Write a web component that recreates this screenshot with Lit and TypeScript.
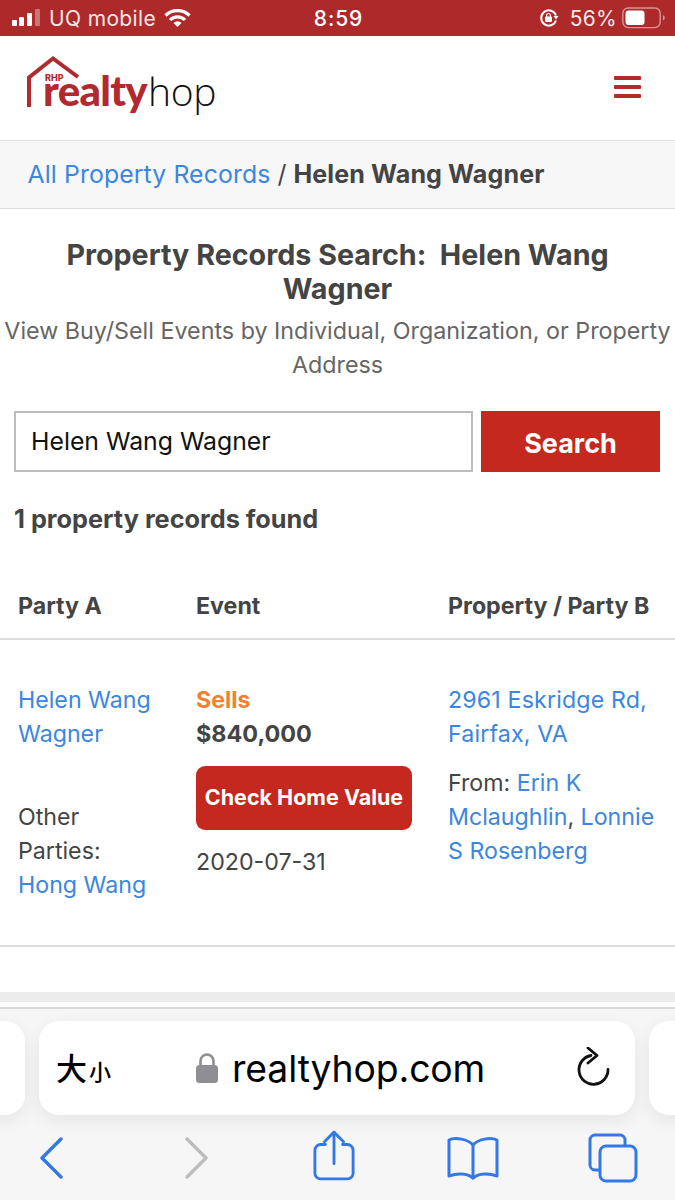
import { LitElement, html, css } from "lit";
import { customElement } from "lit/decorators.js";

@customElement("app-root")
export class AppRoot extends LitElement {
  static styles = css`
    :host { display: block; width: 675px; height: 1200px; overflow: hidden; background: #fff;
      font-family: Inter, "Liberation Sans", sans-serif; color: #444; font-size: 23px; }
    a { color: #3a86e0; text-decoration: none; }
    .status { height: 36px; background: #ae2a2a; color: #fff; display: grid; grid-template-columns: 1fr auto 1fr; align-items: center; padding: 0 9px 0 12px; box-sizing: border-box; font-size: 21px; }
    .s-left { display: flex; align-items: center; gap: 8px; font-weight: 400; letter-spacing: .35px; color: #f5e6e6; }
    .s-right { display: flex; align-items: center; justify-content: flex-end; gap: 5px; color: #f5e6e6; }
    .s-right .pct { margin-left: 6px; letter-spacing: .3px; }
    .time { font-weight: 500; font-size: 21px; letter-spacing: .9px; margin-left: -1px; }
    .head { height: 104px; display: flex; align-items: center; justify-content: space-between; padding: 0 34px 0 26px; box-sizing: border-box; }
    .logo { position: relative; width: 200px; height: 84px; }
    .logo svg { position: absolute; left: 0; top: 0; }
    .logo-text { position: absolute; left: 17px; top: 35px; font-family: Lato, sans-serif; font-size: 42px; line-height: 18px; letter-spacing: -.7px; white-space: nowrap; }
    .logo-text b { color: #b12a2f; font-weight: 900; }
    .logo-text span { color: #111; font-weight: 300; font-family: "Open Sans", sans-serif; font-size: 39px; letter-spacing: -.3px; margin-left: 1px; }
    .rhp { position: absolute; left: 19px; top: 29px; font-size: 9px; line-height: 6px; font-weight: 800; color: #b12a2f; }
    .burger { width: 27px; display: flex; flex-direction: column; gap: 5px; margin-top: -2px; }
    .burger i { height: 4px; background: #b32a2a; border-radius: 1px; display: block; }
    .crumb { height: 69px; background: #f7f7f7; border-top: 1px solid #dcdcdc; border-bottom: 1px solid #dcdcdc; box-sizing: border-box; display: flex; align-items: center; padding: 0 28px 2px 27.500px; font-size: 24.8px; letter-spacing: .1px; }
    .crumb b { font-weight: 700; font-size: 25.1px; }
    .crumb em { font-style: normal; margin: 0 7px; }
    .intro { text-align: center; padding-top: 29px; }
    h1 { margin: 0 30px; font-size: 28.7px; line-height: 34px; font-weight: 700; white-space: pre-wrap; color: #444; }
    .sub { margin-top: 8px; font-size: 23.3px; line-height: 34px; color: #666; white-space: nowrap; }
    .search { display: flex; gap: 8px; margin: 29px 15px 0 14px; height: 61px; }
    .input { flex: 1; border: 2px solid #bdbdbd; box-sizing: border-box; display: flex; align-items: center; padding: 0 0 2px 15px; font-size: 24.8px; color: #111; }
    .btn { width: 179px; background: #c4281f; color: #fff; font-weight: 700; font-size: 27px; display: flex; align-items: center; justify-content: center; padding-top: 3px; box-sizing: border-box; }
    .found { margin: 30px 14px 0; font-size: 25.3px; line-height: 34px; font-weight: 700; }
    .row { display: grid; grid-template-columns: 178px 252px 1fr; padding-left: 18px; }
    .thead { margin-top: 53px; font-weight: 700; font-size: 23.2px; line-height: 34px; border-bottom: 2px solid #ddd; height: 33px; padding-bottom: 16px; }
    .tbody { padding-top: 43px; padding-bottom: 44px; border-bottom: 2px solid #ddd; line-height: 34px; font-size: 23.2px; height: 218px; }
    .addr { letter-spacing: .15px; }
    .others { margin-top: 49px; }
    .sells { color: #ef8233; font-weight: 700; font-size: 23.2px; }
    .price { font-weight: 700; font-size: 23.4px; }
    .cta { margin: 15px 0 15px; width: 216px; height: 64px; border-radius: 9px; background: #c4281f; color: #fff; font-weight: 700; font-size: 21.5px; display: flex; align-items: center; justify-content: center; white-space: nowrap; padding-bottom: 2px; box-sizing: border-box; }
    .from { margin-top: 15px; }
    .band { height: 10px; background: #ececec; margin-top: 45px; }
    .browser { margin-top: 5px; height: 193px; border-top: 2px solid #d8d8d8; background: #f6f6f7; box-sizing: border-box; }
    .tabs { display: flex; gap: 14px; padding-top: 12px; margin-left: -50px; width: 775px; }
    .tab { height: 94px; border-radius: 20px; background: #fff; box-shadow: 0 6px 18px rgba(0,0,0,.07); }
    .side { width: 75px; }
    .url { width: 596px; display: flex; align-items: center; padding: 0 25px 0 17px; box-sizing: border-box; color: #000; }
    .size { width: 139px; margin-top: -4px; font-family: "Noto Sans CJK JP", sans-serif; font-size: 31px; font-weight: 500; line-height: 1; white-space: nowrap; }
    .size small { font-size: 22px; margin-left: 2px; }
    .domain { font-family: Inter, sans-serif; font-size: 37.3px; margin-left: 13px; letter-spacing: -.1px; flex: 1; }
    .tools { display: flex; align-items: flex-start; padding: 17px 0 0 38px; }
    .fwd { margin: 5px 0 0 116px; }
    .back { margin-top: 5px; }
    .share { margin: -3px 0 0 103px; }
    .book { margin: 4px 0 0 91px; }
    .cards { margin: 1px 0 0 88px; }
    svg { display: block; flex: none; }
  `;

  render() {
    return html`
      <div class="status">
        <div class="s-left">
          <svg width="29" height="18" viewBox="0 0 29 18">
            <rect x="0" y="11" width="5" height="6" rx="1" fill="#fff"/>
            <rect x="7" y="8" width="5" height="9" rx="1" fill="#fff"/>
            <rect x="15" y="4" width="5" height="13" rx="1" fill="#fff"/>
            <rect x="23" y="0" width="5" height="17" rx="1" fill="#fff" opacity=".35"/>
          </svg>
          <span>UQ mobile</span>
          <svg width="27" height="20" viewBox="0 0 27 20" fill="none" stroke="#fff" stroke-width="3.2">
            <path d="M1.500 7.500a17 17 0 0 1 24 0"/>
            <path d="M6 12a10.500 10.500 0 0 1 15 0"/>
            <path d="M13.500 19l-4-4a5.600 5.600 0 0 1 8 0z" fill="#fff" stroke="none"/>
          </svg>
        </div>
        <div class="time">8:59</div>
        <div class="s-right">
          <svg width="20" height="20" viewBox="0 0 20 20" fill="none">
            <path d="M17 7.500A7.600 7.600 0 1 0 17 12.500" stroke="#fff" stroke-width="2"/>
            <path d="M14.500 8h5l-2.500 3.400z" fill="#fff"/>
            <rect x="6" y="8.500" width="7" height="5.500" rx="1" fill="#fff"/>
            <path d="M7.600 9V7.400a1.900 1.900 0 0 1 3.800 0V9" stroke="#fff" stroke-width="1.200"/>
          </svg>
          <span class="pct">56%</span>
          <svg width="44" height="22" viewBox="0 0 44 22" fill="none">
            <rect x=".8" y="1" width="37.400" height="19.600" rx="5.500" stroke="#fff" stroke-opacity=".5" stroke-width="1.400"/>
            <rect x="3.500" y="3.500" width="19" height="14.600" rx="3" fill="#fff"/>
            <path d="M41 8v5.500a3 3 0 0 0 0-5.500z" fill="#fff" fill-opacity=".5"/>
          </svg>
        </div>
      </div>

      <div class="head">
        <div class="logo">
          <svg width="60" height="84" viewBox="0 0 60 84" fill="none" stroke="#b12a2f" stroke-width="4">
            <path d="M3 61V31.500L27 12.500 52 31"/>
          </svg>
          <div class="rhp">RHP</div>
          <div class="logo-text"><b>realty</b><span>hop</span></div>
        </div>
        <div class="burger"><i></i><i></i><i></i></div>
      </div>

      <div class="crumb"><a>All Property Records</a><em>/</em><b>Helen Wang Wagner</b></div>

      <div class="intro">
        <h1>Property Records Search:  Helen Wang Wagner</h1>
        <div class="sub">View Buy/Sell Events by Individual, Organization, or Property<br>Address</div>
      </div>

      <div class="search">
        <div class="input">Helen Wang Wagner</div>
        <div class="btn">Search</div>
      </div>

      <div class="found">1 property records found</div>

      <div class="row thead"><div>Party A</div><div>Event</div><div>Property / Party B</div></div>

      <div class="row tbody">
        <div>
          <div><a>Helen Wang<br>Wagner</a></div>
          <div class="others">Other<br>Parties:<br><a>Hong Wang</a></div>
        </div>
        <div>
          <div class="sells">Sells</div>
          <div class="price">$840,000</div>
          <div class="cta">Check Home Value</div>
          <div>2020-07-31</div>
        </div>
        <div>
          <div class="addr"><a>2961 Eskridge Rd,<br>Fairfax, VA</a></div>
          <div class="from">From: <a>Erin K<br>Mclaughlin</a>, <a>Lonnie<br>S Rosenberg</a></div>
        </div>
      </div>

      <div class="band"></div>

      <div class="browser">
        <div class="tabs">
          <div class="tab side"></div>
          <div class="tab url">
            <div class="size">大<small>小</small></div>
            <svg width="24" height="32" viewBox="0 0 24 32" fill="none">
              <path d="M5.500 14V9a6.500 6.500 0 0 1 13 0v5" stroke="#8e8e93" stroke-width="2.600"/>
              <rect x="1" y="13" width="22" height="18" rx="3.500" fill="#8e8e93"/>
            </svg>
            <div class="domain">realtyhop.com</div>
            <svg width="36" height="42" viewBox="0 0 36 42" fill="none" stroke="#111" stroke-width="2.800" stroke-linecap="round" stroke-linejoin="round">
              <path d="M17 8.500a14.500 14.500 0 1 0 17 14"/>
              <path d="M14 1l9 7.500-9 7.500"/>
            </svg>
          </div>
          <div class="tab side"></div>
        </div>
        <div class="tools">
          <svg class="back" width="28" height="42" viewBox="0 0 28 42" fill="none" stroke="#3478e6" stroke-width="3.400" stroke-linecap="round" stroke-linejoin="round"><path d="M23 2L4 21l19 19"/></svg>
          <svg class="fwd" width="28" height="42" viewBox="0 0 28 42" fill="none" stroke="#bdbdbd" stroke-width="3.400" stroke-linecap="round" stroke-linejoin="round"><path d="M5 2l19 19L5 40"/></svg>
          <svg class="share" width="42" height="54" viewBox="0 0 44 54" fill="none" stroke="#3478e6" stroke-width="3" stroke-linecap="round" stroke-linejoin="round"><path d="M13 15H8a6 6 0 0 0-6 6v24a6 6 0 0 0 6 6h28a6 6 0 0 0 6-6V21a6 6 0 0 0-6-6h-5"/><path d="M22 35V3"/><path d="M12 12L22 2l10 10"/></svg>
          <svg class="book" width="54" height="44" viewBox="0 0 54 44" fill="none" stroke="#3478e6" stroke-width="3" stroke-linecap="round" stroke-linejoin="round"><path d="M27 9C22 3 9 1 3 4v36c8-3 18-3 24 2 6-5 16-5 24-2V4c-6-3-19-1-24 5z"/><path d="M27 9v33"/></svg>
          <svg class="cards" width="50" height="50" viewBox="0 0 50 50" fill="none" stroke="#3478e6" stroke-width="3" stroke-linejoin="round"><path d="M12 37H7a5 5 0 0 1-5-5V7a5 5 0 0 1 5-5h25a5 5 0 0 1 5 5v6"/><rect x="12" y="13" width="36" height="35" rx="6"/></svg>
        </div>
      </div>
    `;
  }
}
